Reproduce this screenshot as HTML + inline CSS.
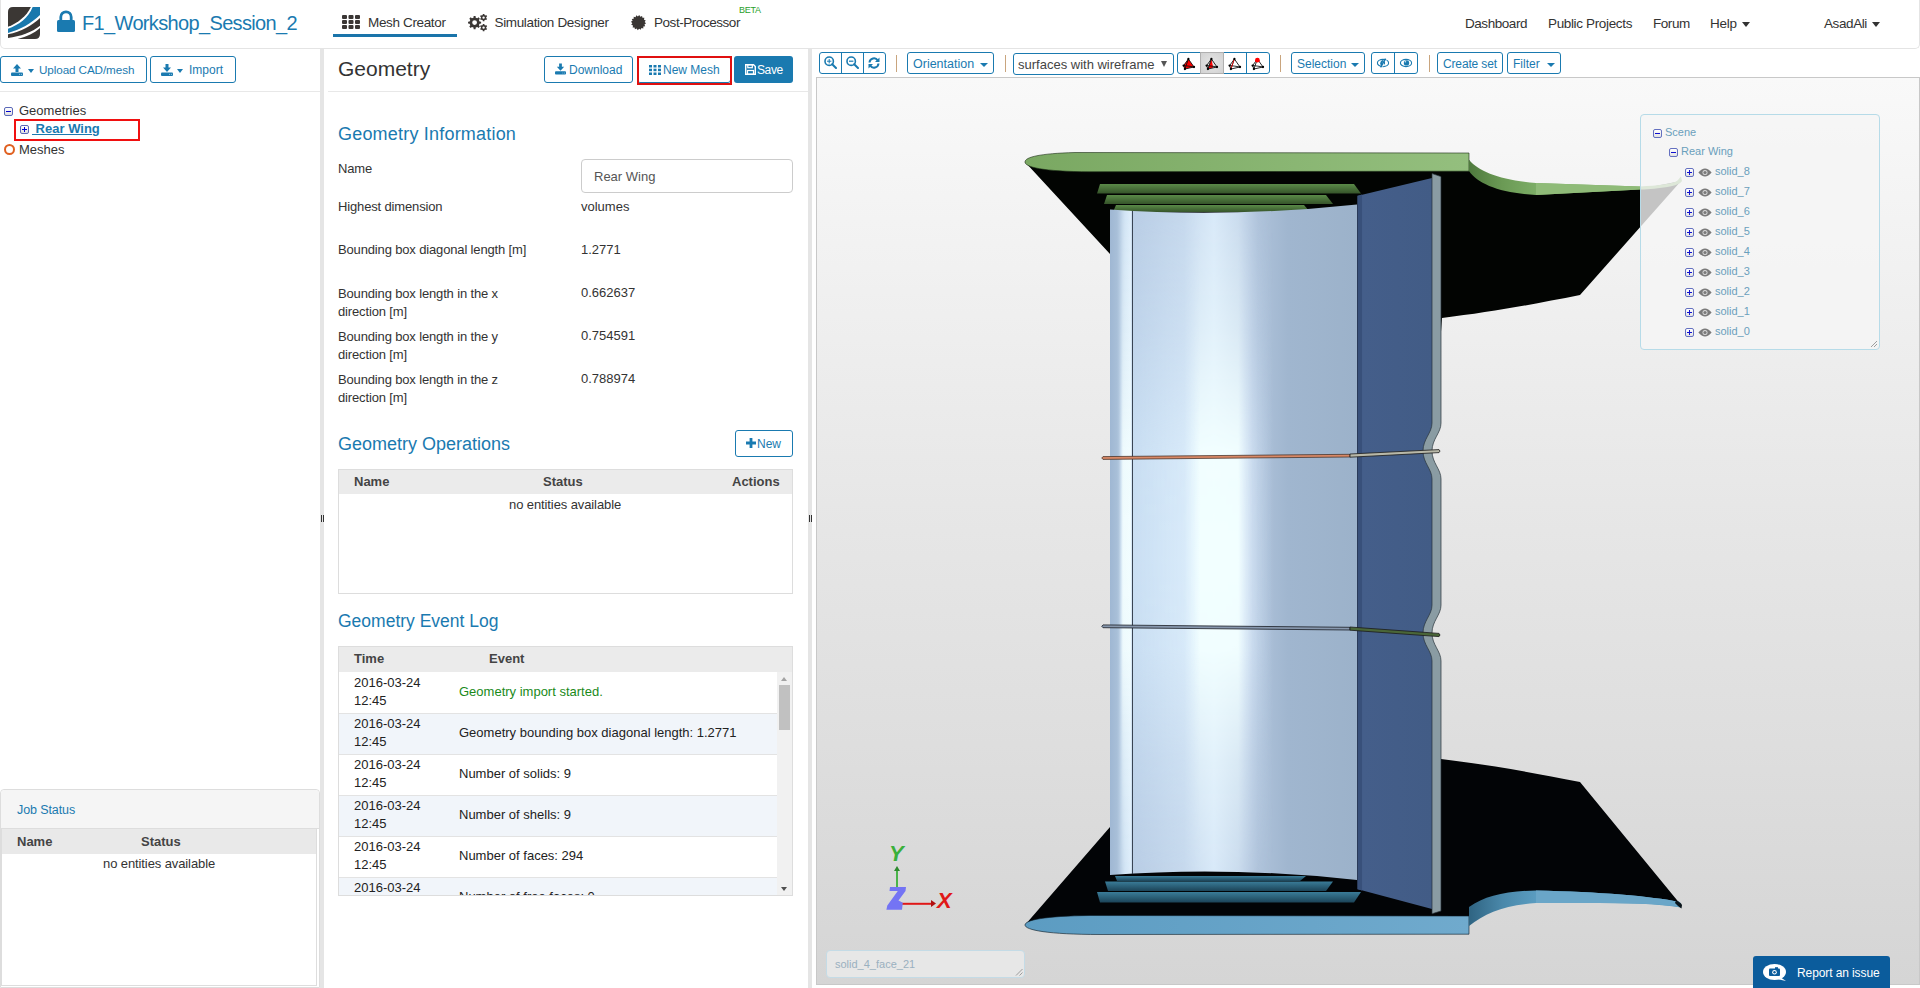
<!DOCTYPE html>
<html><head><meta charset="utf-8">
<style>
*{box-sizing:border-box;margin:0;padding:0}
html,body{width:1920px;height:988px;overflow:hidden;background:#fff;font-family:"Liberation Sans",sans-serif;color:#333}
.a{position:absolute}
.t{position:absolute;white-space:nowrap;line-height:1}
.blue{color:#1a7ab0}
.btn{position:absolute;border:1px solid #1a7ab0;border-radius:3px;background:#fff}
.vsep{position:absolute;width:1px;background:#c9a57e}
</style></head><body>

<!-- NAVBAR -->
<div class="a" style="left:0;top:0;width:1920px;height:49px;border:1px solid #e4e4e4;border-top:none;border-radius:0 0 5px 5px;background:#fff"></div>
<!-- logo -->
<svg class="a" style="left:8px;top:7px" width="32" height="32" viewBox="0 0 32 32">
  <defs><clipPath id="lc"><path d="M5,0 H32 V27 Q32,32 27,32 H0 V5 Q0,0 5,0 Z"/></clipPath></defs>
  <g clip-path="url(#lc)">
    <path d="M-1,-1 H23.3 C19,9 10,16 -1,20.2 Z" fill="#3b3734"/>
    <path d="M25,-1 H33 V7 C24,16 12,23 -1,26.2 V22 C10,18.5 21,11 25,-1 Z" fill="#1878ad"/>
    <path d="M33,10 V18 C25,25 12,30 -1,31 V27.4 C13,25 25,18 33,10 Z" fill="#3b3734"/>
    <path d="M5.5,33 C17,30.5 27,26 33,20 V33 Z" fill="#3b3734"/>
  </g>
</svg>
<!-- lock -->
<svg class="a" style="left:57px;top:10px" width="18" height="22" viewBox="0 0 18 22">
  <path d="M3.8 10 V7 A5.2 5.2 0 0 1 14.2 7 V10" stroke="#1a7ab0" stroke-width="2.8" fill="none"/>
  <rect x="0" y="10" width="18" height="12" rx="1.5" fill="#1a7ab0"/>
</svg>
<div class="t blue" style="left:82px;top:13px;font-size:20px;letter-spacing:-0.65px">F1_Workshop_Session_2</div>

<!-- tabs -->
<svg class="a" style="left:342px;top:15px" width="18" height="14" viewBox="0 0 18 14">
  <g fill="#3a3634">
  <rect x="0" y="0" width="5" height="4" rx="1"/><rect x="6.5" y="0" width="5" height="4" rx="1"/><rect x="13" y="0" width="5" height="4" rx="1"/>
  <rect x="0" y="5" width="5" height="4" rx="1"/><rect x="6.5" y="5" width="5" height="4" rx="1"/><rect x="13" y="5" width="5" height="4" rx="1"/>
  <rect x="0" y="10" width="5" height="4" rx="1"/><rect x="6.5" y="10" width="5" height="4" rx="1"/><rect x="13" y="10" width="5" height="4" rx="1"/>
  </g>
</svg>
<div class="t" style="left:368px;top:15.5px;font-size:13.5px;letter-spacing:-0.35px">Mesh Creator</div>
<div class="a" style="left:333px;top:34px;width:124px;height:3px;background:#1a74aa"></div>

<svg class="a" style="left:468px;top:14px" width="20" height="18" viewBox="0 0 20 18">
  <path fill="#3a3634" fill-rule="evenodd" d="M11.57,7.47 L13.13,7.64 L13.13,9.56 L11.57,9.73 L10.92,11.32 L11.89,12.54 L10.54,13.89 L9.32,12.92 L7.73,13.57 L7.56,15.13 L5.64,15.13 L5.47,13.57 L3.88,12.92 L2.66,13.89 L1.31,12.54 L2.28,11.32 L1.63,9.73 L0.07,9.56 L0.07,7.64 L1.63,7.47 L2.28,5.88 L1.31,4.66 L2.66,3.31 L3.88,4.28 L5.47,3.63 L5.64,2.07 L7.56,2.07 L7.73,3.63 L9.32,4.28 L10.54,3.31 L11.89,4.66 L10.92,5.88Z M9.00,8.60 A2.4,2.4 0 1 0 4.20,8.60 A2.4,2.4 0 1 0 9.00,8.60Z M18.25,4.13 L19.13,4.71 L18.32,6.10 L17.39,5.63 L16.46,6.16 L16.41,7.21 L14.79,7.21 L14.74,6.16 L13.81,5.63 L12.88,6.10 L12.07,4.71 L12.95,4.13 L12.95,3.07 L12.07,2.49 L12.88,1.10 L13.81,1.57 L14.74,1.04 L14.79,-0.01 L16.41,-0.01 L16.46,1.04 L17.39,1.57 L18.32,1.10 L19.13,2.49 L18.25,3.07Z M16.80,3.60 A1.2,1.2 0 1 0 14.40,3.60 A1.2,1.2 0 1 0 16.80,3.60Z M18.25,14.13 L19.13,14.71 L18.32,16.10 L17.39,15.63 L16.46,16.16 L16.41,17.21 L14.79,17.21 L14.74,16.16 L13.81,15.63 L12.88,16.10 L12.07,14.71 L12.95,14.13 L12.95,13.07 L12.07,12.49 L12.88,11.10 L13.81,11.57 L14.74,11.04 L14.79,9.99 L16.41,9.99 L16.46,11.04 L17.39,11.57 L18.32,11.10 L19.13,12.49 L18.25,13.07Z M16.80,13.60 A1.2,1.2 0 1 0 14.40,13.60 A1.2,1.2 0 1 0 16.80,13.60Z"/>
</svg>
<div class="t" style="left:494.5px;top:15.5px;font-size:13.5px;letter-spacing:-0.35px">Simulation Designer</div>

<svg class="a" style="left:630px;top:14px" width="17" height="17" viewBox="0 0 17 17"><path fill="#3a3634" d="M9.24,1.04 L10.30,2.67 L12.08,1.90 L12.43,3.81 L14.37,3.78 L13.97,5.68 L15.77,6.39 L14.67,7.99 L16.06,9.34 L14.43,10.40 L15.20,12.18 L13.29,12.53 L13.32,14.47 L11.42,14.07 L10.71,15.87 L9.11,14.77 L7.76,16.16 L6.70,14.53 L4.92,15.30 L4.57,13.39 L2.63,13.42 L3.03,11.52 L1.23,10.81 L2.33,9.21 L0.94,7.86 L2.57,6.80 L1.80,5.02 L3.71,4.67 L3.68,2.73 L5.58,3.13 L6.29,1.33 L7.89,2.43Z"/></svg>
<div class="t" style="left:654px;top:15.5px;font-size:13.5px;letter-spacing:-0.45px">Post-Processor</div>
<div class="t" style="left:739px;top:6px;font-size:9px;letter-spacing:-0.3px;color:#2aa02a">BETA</div>

<div class="t" style="left:1465px;top:17px;font-size:13.5px;letter-spacing:-0.45px">Dashboard</div>
<div class="t" style="left:1548px;top:17px;font-size:13.5px;letter-spacing:-0.35px">Public Projects</div>
<div class="t" style="left:1653px;top:17px;font-size:13.5px;letter-spacing:-0.45px">Forum</div>
<div class="t" style="left:1710px;top:17px;font-size:13.5px;letter-spacing:-0.25px">Help</div>
<div class="a" style="left:1742px;top:22px;width:0;height:0;border-left:4px solid transparent;border-right:4px solid transparent;border-top:5px solid #333"></div>
<div class="t" style="left:1824px;top:17px;font-size:13.5px;letter-spacing:-0.4px">AsadAli</div>
<div class="a" style="left:1872px;top:22px;width:0;height:0;border-left:4px solid transparent;border-right:4px solid transparent;border-top:5px solid #333"></div>

<!-- DIVIDERS -->
<div class="a" style="left:320px;top:49px;width:4px;height:939px;background:#e5e5e5"></div>
<div class="a" style="left:321px;top:515px;width:1px;height:7px;background:#333"></div>
<div class="a" style="left:323px;top:515px;width:1px;height:7px;background:#333"></div>
<div class="a" style="left:808px;top:49px;width:4px;height:939px;background:#e5e5e5"></div>
<div class="a" style="left:809px;top:515px;width:1px;height:7px;background:#333"></div>
<div class="a" style="left:811px;top:515px;width:1px;height:7px;background:#333"></div>

<!-- LEFT PANEL -->

<div class="btn" style="left:0;top:56px;width:147px;height:27px"></div>
<svg class="a" style="left:11px;top:64px" width="12" height="12" viewBox="0 0 12 12">
  <path d="M6 0 L10 4.5 H7.5 V8 H4.5 V4.5 H2Z" fill="#1a7ab0"/>
  <rect x="0" y="8.5" width="12" height="3.5" rx="1" fill="#1a7ab0"/><circle cx="8.6" cy="10.3" r="0.5" fill="#cfe4f0"/><circle cx="10.4" cy="10.3" r="0.5" fill="#cfe4f0"/>
</svg>
<div class="a" style="left:28px;top:69px;border-left:3.5px solid transparent;border-right:3.5px solid transparent;border-top:4px solid #1a7ab0"></div>
<div class="t blue" style="left:39px;top:64px;font-size:11.7px;letter-spacing:-0.1px">Upload CAD/mesh</div>
<div class="btn" style="left:150px;top:56px;width:86px;height:27px"></div>
<svg class="a" style="left:161px;top:64px" width="12" height="12" viewBox="0 0 12 12">
  <path d="M6 8 L10 3.5 H7.5 V0 H4.5 V3.5 H2Z" fill="#1a7ab0"/>
  <rect x="0" y="8.5" width="12" height="3.5" rx="1" fill="#1a7ab0"/><circle cx="8.6" cy="10.3" r="0.5" fill="#cfe4f0"/><circle cx="10.4" cy="10.3" r="0.5" fill="#cfe4f0"/>
</svg>
<div class="a" style="left:177px;top:69px;border-left:3.5px solid transparent;border-right:3.5px solid transparent;border-top:4px solid #1a7ab0"></div>
<div class="t blue" style="left:189px;top:64px;font-size:12px">Import</div>
<div class="a" style="left:0;top:91px;width:320px;height:1px;background:#e8e8e8"></div>

<!-- tree -->
<div class="a" style="left:4px;top:107px;width:9px;height:9px;border:1px solid #5a68b8;border-radius:2px;background:linear-gradient(#fff,#dedede)"></div>
<div class="a" style="left:6px;top:111px;width:5px;height:1.3px;background:#0000d0"></div>
<div class="t" style="left:19px;top:104px;font-size:13px;color:#333">Geometries</div>
<div class="a" style="left:14px;top:119px;width:126px;height:22px;border:2px solid #f01010"></div>
<div class="a" style="left:20px;top:125px;width:9px;height:9px;border:1px solid #5a68b8;border-radius:2px;background:linear-gradient(#fff,#dedede)"></div>
<div class="a" style="left:22px;top:129px;width:5px;height:1.3px;background:#0000d0"></div>
<div class="a" style="left:23.85px;top:127px;width:1.3px;height:5px;background:#0000d0"></div>
<div class="t" style="left:32px;top:122px;font-size:13px;font-weight:bold;color:#1a7ab0;text-decoration:underline">&nbsp;Rear Wing</div>
<div class="a" style="left:4px;top:144px;width:11px;height:11px;border:2px solid #e06020;border-radius:50%"></div>
<div class="t" style="left:19px;top:143px;font-size:13px;color:#333">Meshes</div>

<!-- job status -->
<div class="a" style="left:0;top:789px;width:320px;height:199px;border:1px solid #ddd;border-radius:4px 4px 0 0;background:#fff"></div>
<div class="a" style="left:1px;top:790px;width:318px;height:39px;background:#f5f5f5;border-bottom:1px solid #ddd;border-radius:4px 4px 0 0"></div>
<div class="t blue" style="left:17px;top:804px;font-size:12.5px;letter-spacing:-0.1px">Job Status</div>
<div class="a" style="left:1px;top:829px;width:316px;height:157px;border:1px solid #ddd;border-top:none;background:#fff"></div>
<div class="a" style="left:2px;top:829px;width:314px;height:25px;background:#e9e9e9"></div>
<div class="t" style="left:17px;top:835px;font-size:13px;font-weight:bold;color:#444">Name</div>
<div class="t" style="left:141px;top:835px;font-size:13px;font-weight:bold;color:#444">Status</div>
<div class="t" style="left:103px;top:857px;font-size:13px;color:#333;letter-spacing:-0.1px">no entities available</div>


<!-- MIDDLE PANEL -->

<div class="t" style="left:338px;top:58px;font-size:21px;color:#333">Geometry</div>
<div class="btn" style="left:544px;top:56px;width:89px;height:27px"></div>
<svg class="a" style="left:555px;top:63px" width="11" height="12" viewBox="0 0 12 12">
  <path d="M6 8 L10 3.5 H7.5 V0 H4.5 V3.5 H2Z" fill="#1a7ab0"/>
  <rect x="0" y="8.5" width="12" height="3.5" rx="1" fill="#1a7ab0"/><circle cx="8.6" cy="10.3" r="0.5" fill="#cfe4f0"/><circle cx="10.4" cy="10.3" r="0.5" fill="#cfe4f0"/>
</svg>
<div class="t blue" style="left:569px;top:64px;font-size:12px">Download</div>
<div class="btn" style="left:637px;top:56px;width:94px;height:27px"></div>
<div class="a" style="left:637px;top:56px;width:95px;height:29px;border:2px solid #e01010"></div>
<svg class="a" style="left:649px;top:65px" width="12" height="10" viewBox="0 0 12 10">
  <g fill="#1a7ab0"><rect x="0" y="0" width="3" height="2.5"/><rect x="4.5" y="0" width="3" height="2.5"/><rect x="9" y="0" width="3" height="2.5"/>
  <rect x="0" y="3.7" width="3" height="2.5"/><rect x="4.5" y="3.7" width="3" height="2.5"/><rect x="9" y="3.7" width="3" height="2.5"/>
  <rect x="0" y="7.5" width="3" height="2.5"/><rect x="4.5" y="7.5" width="3" height="2.5"/><rect x="9" y="7.5" width="3" height="2.5"/></g>
</svg>
<div class="t blue" style="left:663px;top:64px;font-size:12px">New Mesh</div>
<div class="a" style="left:734px;top:56px;width:59px;height:27px;background:#1a7ab0;border-radius:3px"></div>
<svg class="a" style="left:745px;top:64px" width="11" height="11" viewBox="0 0 11 11">
  <path d="M0.7 0.7 H8.5 L10.3 2.5 V10.3 H0.7Z" fill="none" stroke="#fff" stroke-width="1.4"/>
  <rect x="2.8" y="0.7" width="4.5" height="3" fill="none" stroke="#fff" stroke-width="1.2"/>
  <rect x="2.5" y="6.5" width="6" height="3.8" fill="none" stroke="#fff" stroke-width="1.2"/>
</svg>
<div class="t" style="left:757px;top:64px;font-size:12px;color:#fff;letter-spacing:-0.4px">Save</div>
<div class="a" style="left:328px;top:91px;width:480px;height:1px;background:#e8e8e8"></div>

<div class="t blue" style="left:338px;top:125px;font-size:18px;letter-spacing:0.2px">Geometry Information</div>
<div class="t" style="left:338px;top:162px;font-size:13px;letter-spacing:-0.15px">Name</div>
<div class="a" style="left:581px;top:159px;width:212px;height:34px;border:1px solid #ccc;border-radius:4px;background:#fff"></div>
<div class="t" style="left:594px;top:170px;font-size:13px;color:#555">Rear Wing</div>
<div class="t" style="left:338px;top:200px;font-size:13px;letter-spacing:-0.15px">Highest dimension</div>
<div class="t" style="left:581px;top:200px;font-size:13px">volumes</div>
<div class="t" style="left:338px;top:243px;font-size:13px;letter-spacing:-0.15px">Bounding box diagonal length [m]</div>
<div class="t" style="left:581px;top:243px;font-size:13px">1.2771</div>
<div class="t" style="left:338px;top:285px;font-size:13px;letter-spacing:-0.15px;line-height:18px">Bounding box length in the x<br>direction [m]</div>
<div class="t" style="left:581px;top:286px;font-size:13px">0.662637</div>
<div class="t" style="left:338px;top:328px;font-size:13px;letter-spacing:-0.15px;line-height:18px">Bounding box length in the y<br>direction [m]</div>
<div class="t" style="left:581px;top:329px;font-size:13px">0.754591</div>
<div class="t" style="left:338px;top:371px;font-size:13px;letter-spacing:-0.15px;line-height:18px">Bounding box length in the z<br>direction [m]</div>
<div class="t" style="left:581px;top:372px;font-size:13px">0.788974</div>

<div class="t blue" style="left:338px;top:435px;font-size:18px">Geometry Operations</div>
<div class="btn" style="left:735px;top:430px;width:58px;height:27px"></div>
<svg class="a" style="left:746px;top:438px" width="10" height="10" viewBox="0 0 10 10"><path d="M3.6 0H6.4V3.6H10V6.4H6.4V10H3.6V6.4H0V3.6H3.6Z" fill="#1a7ab0"/></svg>
<div class="t blue" style="left:757px;top:438px;font-size:12px">New</div>
<div class="a" style="left:338px;top:469px;width:455px;height:125px;border:1px solid #ddd;background:#fff"></div>
<div class="a" style="left:339px;top:470px;width:453px;height:24px;background:#ebebeb"></div>
<div class="t" style="left:354px;top:475px;font-size:13px;font-weight:bold;color:#444">Name</div>
<div class="t" style="left:543px;top:475px;font-size:13px;font-weight:bold;color:#444">Status</div>
<div class="t" style="left:732px;top:475px;font-size:13px;font-weight:bold;color:#444">Actions</div>
<div class="t" style="left:509px;top:498px;font-size:13px;letter-spacing:-0.1px">no entities available</div>

<div class="t blue" style="left:338px;top:613px;font-size:17.5px;">Geometry Event Log</div>
<div class="a" style="left:338px;top:646px;width:455px;height:250px;border:1px solid #ddd;background:#fff;overflow:hidden">
  <div class="a" style="left:0;top:0;width:453px;height:25px;background:#ebebeb"></div>
  <div class="t" style="left:15px;top:5px;font-size:13px;font-weight:bold;color:#444">Time</div>
  <div class="t" style="left:150px;top:5px;font-size:13px;font-weight:bold;color:#444">Event</div>
  <div class="a" style="left:0;top:25px;width:438px;height:41px;background:#fff;border-top:none"></div><div class="t" style="left:15px;top:27px;font-size:13px;line-height:18px;color:#222">2016-03-24<br>12:45</div><div class="t" style="left:120px;top:38px;font-size:13px;color:#1a8a1a">Geometry import started.</div><div class="a" style="left:0;top:66px;width:438px;height:41px;background:#f1f5fa;border-top:1px solid #e3e3e3"></div><div class="t" style="left:15px;top:68px;font-size:13px;line-height:18px;color:#222">2016-03-24<br>12:45</div><div class="t" style="left:120px;top:79px;font-size:13px;color:#222">Geometry bounding box diagonal length: 1.2771</div><div class="a" style="left:0;top:107px;width:438px;height:41px;background:#fff;border-top:1px solid #e3e3e3"></div><div class="t" style="left:15px;top:109px;font-size:13px;line-height:18px;color:#222">2016-03-24<br>12:45</div><div class="t" style="left:120px;top:120px;font-size:13px;color:#222">Number of solids: 9</div><div class="a" style="left:0;top:148px;width:438px;height:41px;background:#f1f5fa;border-top:1px solid #e3e3e3"></div><div class="t" style="left:15px;top:150px;font-size:13px;line-height:18px;color:#222">2016-03-24<br>12:45</div><div class="t" style="left:120px;top:161px;font-size:13px;color:#222">Number of shells: 9</div><div class="a" style="left:0;top:189px;width:438px;height:41px;background:#fff;border-top:1px solid #e3e3e3"></div><div class="t" style="left:15px;top:191px;font-size:13px;line-height:18px;color:#222">2016-03-24<br>12:45</div><div class="t" style="left:120px;top:202px;font-size:13px;color:#222">Number of faces: 294</div><div class="a" style="left:0;top:230px;width:438px;height:41px;background:#f1f5fa;border-top:1px solid #e3e3e3"></div><div class="t" style="left:15px;top:232px;font-size:13px;line-height:18px;color:#222">2016-03-24<br>12:45</div><div class="t" style="left:120px;top:243px;font-size:13px;color:#222">Number of free faces: 0</div>
  <div class="a" style="left:438px;top:25px;width:15px;height:224px;background:#f1f1f1"></div>
  <div class="a" style="left:440px;top:38px;width:11px;height:45px;background:#c1c1c1"></div>
  <div class="a" style="left:442px;top:30px;border-left:3.5px solid transparent;border-right:3.5px solid transparent;border-bottom:4px solid #a3a3a3"></div>
  <div class="a" style="left:442px;top:240px;border-left:3.5px solid transparent;border-right:3.5px solid transparent;border-top:4px solid #505050"></div>
</div>


<!-- VIEWER -->

<!-- toolbar -->
<div class="a" style="left:812px;top:49px;width:1108px;height:28px;background:#fff"></div>
<div class="btn" style="left:819px;top:52px;width:67px;height:22px"></div>
<div class="a" style="left:841px;top:52px;width:1px;height:22px;background:#1a7ab0"></div>
<div class="a" style="left:863px;top:52px;width:1px;height:22px;background:#1a7ab0"></div>
<svg class="a" style="left:824px;top:56px" width="13" height="13" viewBox="0 0 13 13">
  <circle cx="5.2" cy="5.2" r="4.2" fill="none" stroke="#1a7ab0" stroke-width="1.6"/>
  <line x1="8.2" y1="8.2" x2="12" y2="12" stroke="#1a7ab0" stroke-width="2" stroke-linecap="round"/>
  <line x1="3" y1="5.2" x2="7.4" y2="5.2" stroke="#1a7ab0" stroke-width="1"/>
  <line x1="5.2" y1="3" x2="5.2" y2="7.4" stroke="#1a7ab0" stroke-width="1"/>
</svg>
<svg class="a" style="left:846px;top:56px" width="13" height="13" viewBox="0 0 13 13">
  <circle cx="5.2" cy="5.2" r="4.2" fill="none" stroke="#1a7ab0" stroke-width="1.6"/>
  <line x1="8.2" y1="8.2" x2="12" y2="12" stroke="#1a7ab0" stroke-width="2" stroke-linecap="round"/>
  <line x1="3" y1="5.2" x2="7.4" y2="5.2" stroke="#1a7ab0" stroke-width="1.2"/>
</svg>
<svg class="a" style="left:868px;top:57px" width="12" height="12" viewBox="0 0 12 12">
  <path d="M1.5 5.5 A4.5 4.5 0 0 1 9.8 3.5" fill="none" stroke="#1a7ab0" stroke-width="2"/>
  <path d="M11.5 0.5 V5 H7Z" fill="#1a7ab0"/>
  <path d="M10.5 6.5 A4.5 4.5 0 0 1 2.2 8.5" fill="none" stroke="#1a7ab0" stroke-width="2"/>
  <path d="M0.5 11.5 V7 H5Z" fill="#1a7ab0"/>
</svg>
<div class="vsep" style="left:896px;top:55px;height:17px"></div>
<div class="btn" style="left:907px;top:52px;width:87px;height:22px"></div>
<div class="t blue" style="left:913px;top:58px;font-size:12.5px">Orientation</div>
<div class="a" style="left:980px;top:63px;border-left:4px solid transparent;border-right:4px solid transparent;border-top:4px solid #1a7ab0"></div>
<div class="vsep" style="left:1005px;top:55px;height:17px"></div>
<div class="btn" style="left:1013px;top:53px;width:161px;height:22px"></div>
<div class="t" style="left:1018px;top:58px;font-size:13px;color:#444">surfaces with wireframe</div>
<div class="a" style="left:1161px;top:61px;border-left:3px solid transparent;border-right:3px solid transparent;border-top:6px solid #555"></div>
<div class="btn" style="left:1177px;top:52px;width:93px;height:22px"></div>
<div class="a" style="left:1200px;top:52px;width:24px;height:22px;background:radial-gradient(ellipse at center,#e6e6e6 0%,#d2d2d2 100%);border:1px solid #b0b0b0"></div>
<div class="a" style="left:1246px;top:52px;width:1px;height:22px;background:#1a7ab0"></div>
<svg class="a" style="left:1182px;top:56px" width="14" height="16" viewBox="0 0 14 16"><path d="M6.4,3.0 L1.6,9.6 L2.9,13.0 L12.0,11.0Z" fill="#f00"/><path d="M6.4,3.0 L1.6,9.6 M6.4,3.0 L2.9,13.0 M6.4,3.0 L12.0,11.0 M1.6,9.6 L2.9,13.0 M2.9,13.0 L12.0,11.0 M1.6,9.6 Q7,10 12.0,11.0" fill="none" stroke="#111" stroke-width="0.9"/><circle cx="6.4" cy="3" r="1.15" fill="#000"/><circle cx="1.6" cy="9.6" r="1.15" fill="#000"/><circle cx="2.9" cy="13" r="1.15" fill="#000"/><circle cx="12" cy="11" r="1.15" fill="#000"/></svg><svg class="a" style="left:1205px;top:56px" width="14" height="16" viewBox="0 0 14 16"><path d="M6.4,3.0 L2.9,13.0 L8.2,11.5Z" fill="#f00"/><path d="M6.4,3.0 L1.6,9.6 M6.4,3.0 L2.9,13.0 M6.4,3.0 L12.0,11.0 M1.6,9.6 L2.9,13.0 M2.9,13.0 L12.0,11.0 M1.6,9.6 Q7,10 12.0,11.0" fill="none" stroke="#111" stroke-width="0.9"/><circle cx="6.4" cy="3" r="1.15" fill="#000"/><circle cx="1.6" cy="9.6" r="1.15" fill="#000"/><circle cx="2.9" cy="13" r="1.15" fill="#000"/><circle cx="12" cy="11" r="1.15" fill="#000"/></svg><svg class="a" style="left:1228px;top:56px" width="14" height="16" viewBox="0 0 14 16"><path d="M6.4,3.0 L1.6,9.6 M6.4,3.0 L2.9,13.0 M6.4,3.0 L12.0,11.0 M1.6,9.6 L2.9,13.0 M2.9,13.0 L12.0,11.0 M1.6,9.6 Q7,10 12.0,11.0" fill="none" stroke="#111" stroke-width="0.9"/><line x1="6.2" y1="3.5" x2="3" y2="12.5" stroke="#f00" stroke-width="0.8"/><circle cx="6.4" cy="3" r="1.15" fill="#000"/><circle cx="1.6" cy="9.6" r="1.15" fill="#000"/><circle cx="2.9" cy="13" r="1.15" fill="#000"/><circle cx="12" cy="11" r="1.15" fill="#000"/></svg><svg class="a" style="left:1251px;top:56px" width="14" height="16" viewBox="0 0 14 16"><path d="M6.4,3.0 L1.6,9.6 M6.4,3.0 L2.9,13.0 M6.4,3.0 L12.0,11.0 M1.6,9.6 L2.9,13.0 M2.9,13.0 L12.0,11.0 M1.6,9.6 Q7,10 12.0,11.0" fill="none" stroke="#111" stroke-width="0.9"/><circle cx="1.6" cy="9.6" r="1.15" fill="#000"/><circle cx="2.9" cy="13" r="1.15" fill="#000"/><circle cx="12" cy="11" r="1.15" fill="#000"/><circle cx="6.4" cy="4.2" r="2.4" fill="#f00"/></svg>
<div class="vsep" style="left:1280px;top:55px;height:17px"></div>
<div class="btn" style="left:1291px;top:52px;width:74px;height:22px"></div>
<div class="t blue" style="left:1297px;top:58px;font-size:12px">Selection</div>
<div class="a" style="left:1351px;top:63px;border-left:4px solid transparent;border-right:4px solid transparent;border-top:4px solid #1a7ab0"></div>
<div class="btn" style="left:1371px;top:52px;width:47px;height:22px"></div>
<div class="a" style="left:1394px;top:52px;width:1px;height:22px;background:#1a7ab0"></div>
<svg class="a" style="left:1376px;top:58px" width="14" height="10" viewBox="0 0 14 10">
  <ellipse cx="7" cy="5" rx="5.6" ry="3.6" fill="none" stroke="#1a7ab0" stroke-width="1.1"/>
  <path d="M4.2 5.5 Q4.5 2.5 7.5 1.8 L5.6 8.2 Q4.3 7.2 4.2 5.5Z" fill="#1a7ab0"/>
  <line x1="9.6" y1="0.6" x2="4.6" y2="9.4" stroke="#1a7ab0" stroke-width="1.5"/>
  <line x1="10.8" y1="1.2" x2="6" y2="9.8" stroke="#fff" stroke-width="0.7"/>
  <path d="M8.3 3.5 Q9 5 8.2 6.5" fill="none" stroke="#1a7ab0" stroke-width="1"/>
</svg>
<svg class="a" style="left:1399px;top:58px" width="14" height="10" viewBox="0 0 14 10">
  <ellipse cx="7" cy="5" rx="5.6" ry="3.6" fill="none" stroke="#1a7ab0" stroke-width="1.1"/>
  <circle cx="7.5" cy="4.9" r="2.7" fill="#1a7ab0"/>
  <circle cx="6.4" cy="3.8" r="0.8" fill="#cfe6f2"/>
</svg>
<div class="vsep" style="left:1429px;top:55px;height:17px"></div>
<div class="btn" style="left:1437px;top:52px;width:66px;height:22px"></div>
<div class="t blue" style="left:1443px;top:58px;font-size:12px;letter-spacing:-0.15px">Create set</div>
<div class="btn" style="left:1507px;top:52px;width:54px;height:22px"></div>
<div class="t blue" style="left:1513px;top:58px;font-size:12px">Filter</div>
<div class="a" style="left:1547px;top:63px;border-left:4px solid transparent;border-right:4px solid transparent;border-top:4px solid #1a7ab0"></div>

<!-- canvas -->
<div class="a" style="left:816px;top:77px;width:1104px;height:908px;border:1px solid #c8c8c8;background:linear-gradient(to bottom,#f9f9f9 0%,#e7e7e7 47%,#d5d5d5 100%)"></div>

<svg class="a" style="left:0;top:0" width="1920" height="988" viewBox="0 0 1920 988">
<defs>
  <linearGradient id="gTop" x1="0" x2="1" y1="0" y2="0">
    <stop offset="0" stop-color="#7aa862"/><stop offset="1" stop-color="#94bf7e"/>
  </linearGradient>
  <linearGradient id="gCurveTop" x1="1469" x2="1536" y1="0" y2="0" gradientUnits="userSpaceOnUse">
    <stop offset="0" stop-color="#4f7a3e"/><stop offset="0.5" stop-color="#6b9a55"/><stop offset="1" stop-color="#7cad66"/>
  </linearGradient>
  <linearGradient id="gSlat" x1="0" x2="0" y1="0" y2="1">
    <stop offset="0" stop-color="#5a8a48"/><stop offset="1" stop-color="#36542a"/>
  </linearGradient>
  <linearGradient id="gMain" x1="1110" x2="1357" y1="0" y2="0" gradientUnits="userSpaceOnUse"><stop offset="0.0000" stop-color="#9fb7d3"/><stop offset="0.0283" stop-color="#a8bfd8"/><stop offset="0.0607" stop-color="#cfe2f4"/><stop offset="0.0850" stop-color="#dcecfa"/><stop offset="0.0891" stop-color="#b8cce4"/><stop offset="0.1215" stop-color="#b9cde5"/><stop offset="0.2996" stop-color="#c4d7ec"/><stop offset="0.4211" stop-color="#d6e7f8"/><stop offset="0.5182" stop-color="#c6d8ec"/><stop offset="0.5992" stop-color="#aec2da"/><stop offset="0.7206" stop-color="#a0b6cf"/><stop offset="1.0000" stop-color="#9cb2ca"/></linearGradient>
  <linearGradient id="gHi" x1="1110" x2="1357" y1="0" y2="0" gradientUnits="userSpaceOnUse"><stop offset="0.0000" stop-color="#e8f6ff" stop-opacity="0"/><stop offset="0.0364" stop-color="#e8f6ff" stop-opacity="0"/><stop offset="0.0526" stop-color="#f4ffff" stop-opacity="0.9"/><stop offset="0.0850" stop-color="#f4ffff" stop-opacity="0.9"/><stop offset="0.0891" stop-color="#e0f0ff" stop-opacity="0"/><stop offset="0.0931" stop-color="#d8eeff" stop-opacity="0.55"/><stop offset="0.2996" stop-color="#e0f2ff" stop-opacity="0.7"/><stop offset="0.3644" stop-color="#f2ffff" stop-opacity="1"/><stop offset="0.5182" stop-color="#f2ffff" stop-opacity="1"/><stop offset="0.5749" stop-color="#e2f0ff" stop-opacity="0.5"/><stop offset="0.6640" stop-color="#d8ebff" stop-opacity="0"/><stop offset="1.0000" stop-color="#d8ebff" stop-opacity="0"/></linearGradient>
  <linearGradient id="gHiV" x1="0" x2="0" y1="210" y2="875" gradientUnits="userSpaceOnUse"><stop offset="0.0000" stop-color="#fff" stop-opacity="0.1"/><stop offset="0.1805" stop-color="#fff" stop-opacity="0.45"/><stop offset="0.3609" stop-color="#fff" stop-opacity="0.95"/><stop offset="0.5263" stop-color="#fff" stop-opacity="1"/><stop offset="0.6617" stop-color="#fff" stop-opacity="0.95"/><stop offset="0.8271" stop-color="#fff" stop-opacity="0.45"/><stop offset="1.0000" stop-color="#fff" stop-opacity="0.1"/></linearGradient>
  <mask id="mHi" maskUnits="userSpaceOnUse" x="1100" y="200" width="270" height="690"><rect x="1100" y="200" width="270" height="690" fill="url(#gHiV)"/></mask>
  </linearGradient>
  <linearGradient id="gDark" x1="0" x2="1" y1="0" y2="0">
    <stop offset="0" stop-color="#3c5580"/><stop offset="0.08" stop-color="#445e8a"/><stop offset="1" stop-color="#425c86"/>
  </linearGradient>
  <linearGradient id="gBot" x1="0" x2="1" y1="0" y2="0">
    <stop offset="0" stop-color="#5c9cc2"/><stop offset="1" stop-color="#70aacd"/>
  </linearGradient>
  <linearGradient id="gCurveBot" x1="1469" x2="1536" y1="0" y2="0" gradientUnits="userSpaceOnUse">
    <stop offset="0" stop-color="#2f6482"/><stop offset="0.5" stop-color="#4a88aa"/><stop offset="1" stop-color="#5a9cc0"/>
  </linearGradient>
  <linearGradient id="gSlatB" x1="0" x2="0" y1="0" y2="1">
    <stop offset="0" stop-color="#3a7c98"/><stop offset="1" stop-color="#1c4458"/>
  </linearGradient>
</defs>

<!-- upper black underside -->
<path d="M1025,162 L1469,160 C1480,178 1505,186 1536,190 L1640,189 L1681,181 L1580,295 C1530,305 1490,312 1442,318 L1436,400 L1200,400 L1200,260 L1110,260 L1110,254 Z" fill="#020402"/>
<!-- lower black underside -->
<path d="M1110,827 L1025,925 L1469,918 C1480,905 1505,894 1536,891 L1681,905 L1580,782 C1530,772 1490,765 1441,759 L1436,700 L1200,700 L1200,850 L1110,850 Z" fill="#020406"/>

<!-- upper slats -->
<path d="M1100,184 L1354,184 L1361,193.5 L1097,193.5Z" fill="url(#gSlat)"/>
<path d="M1107,195 L1326,195 L1333,204 L1104,204Z" fill="url(#gSlat)"/>
<path d="M1116,205 L1304,205 L1310,212 L1113,212Z" fill="url(#gSlat)"/>
<!-- lower slats -->
<path d="M1115,876 L1306,876 L1300,881 L1117,881Z" fill="url(#gSlatB)"/>
<path d="M1105,881.5 L1333,881.5 L1326,891 L1108,891Z" fill="url(#gSlatB)"/>
<path d="M1097,892 L1361,892 L1354,902.5 L1100,902.5Z" fill="url(#gSlatB)"/>

<!-- top green plate -->
<path d="M1469,153 L1075,152.5 C1040,153.5 1025,157 1025,162 C1025,167 1042,171.5 1090,171.8 L1469,171.2 Z" fill="url(#gTop)" stroke="#1a2a14" stroke-width="0.6"/>
<!-- top curve band -->
<path d="M1469,160 C1480,172 1500,180 1536,183 L1640,186.5 C1658,185.5 1670,184 1676,181.5 C1679,180 1679,178 1681,176.5 L1682,181 C1680,184 1676,185 1670,186.5 C1658,188.5 1650,189.3 1640,189.6 L1536,195 C1500,193 1478,184 1469,171 Z" fill="url(#gCurveTop)"/>
<path d="M1536,183 L1640,186.5 L1640,189.6 L1536,195Z" fill="#8fbb78"/>

<!-- bottom blue plate -->
<path d="M1469,916 L1090,915.5 C1045,916 1025,920 1025,925 C1025,930 1048,934.5 1100,934.5 L1469,934.2 Z" fill="url(#gBot)" stroke="#0a1a24" stroke-width="0.6"/>
<!-- bottom curve band -->
<path d="M1469,907 C1485,896 1505,891 1536,890.5 C1600,892 1650,896 1680,902 L1681,907.5 C1650,902 1600,903 1536,903 C1505,905 1485,913 1469,926 Z" fill="url(#gCurveBot)"/>
<path d="M1536,890.5 C1600,892 1650,896 1680,902 L1681,907 C1650,902 1600,903 1536,903Z" fill="#6aa6c8"/>
<path d="M1676,900.5 C1679,901.5 1681,903 1682,905 L1681.5,908.5 C1679,907 1677,905 1675,903Z" fill="#0a141a"/>

<!-- main light plate -->
<path d="M1110,209.5 Q1230,218 1357,204.5 L1357,880 Q1230,866 1110,875 Z" fill="url(#gMain)"/>
<path d="M1110,209.5 Q1230,218 1357,204.5 L1357,880 Q1230,866 1110,875 Z" fill="url(#gHi)" mask="url(#mHi)"/>
<line x1="1132.5" y1="211" x2="1132.5" y2="874" stroke="#2a3442" stroke-width="0.9"/>

<!-- dark blue plate -->
<path d="M1357,196 L1432,178 L1432,909 L1357,889 Z" fill="url(#gDark)"/>
<path d="M1357,196 L1362,194.5 L1362,890.5 L1357,889Z" fill="#38507a"/><line x1="1357.5" y1="196" x2="1357.5" y2="889" stroke="#2a3a58" stroke-width="1"/>
<!-- grey strip with notches -->
<path d="M1432,173.5 L1441,176.6 L1441,423 C1441,433 1432,439 1432,451 C1432,463 1441,469 1441,479 L1441,605 C1441,615 1432,621 1432,633 C1432,645 1441,651 1441,661 L1441,911 L1432,913.8 L1432,661 C1432,651 1423,645 1423,633 C1423,621 1432,615 1432,605 L1432,479 C1432,469 1423,463 1423,451 C1423,439 1432,433 1432,423 Z" fill="#8a9ca3" stroke="#26323a" stroke-width="0.7"/>

<!-- rings -->
<path d="M1103,456.6 L1350,454.3 L1350,457 L1103,459.4 Q1100.5,458 1103,456.6Z" fill="#d88866" stroke="#3a2a22" stroke-width="0.7"/>
<path d="M1350,454 L1439,449.6 Q1441,451 1439,452.6 L1350,457.2Z" fill="#b8b8a8" stroke="#1a1a1a" stroke-width="0.8"/>
<path d="M1103,624.9 L1350,627.3 L1350,630 L1103,627.7 Q1100.5,626.3 1103,624.9Z" fill="#8797ad" stroke="#1a1e26" stroke-width="0.8"/>
<path d="M1350,627 L1439,633.4 Q1441,635 1439,636.6 L1350,630.2Z" fill="#4a6638" stroke="#1a1a1a" stroke-width="0.8"/>
</svg>


<div class="a" style="left:1640px;top:114px;width:240px;height:236px;border:1px solid #b6dbe8;border-radius:4px;background:rgba(245,245,245,0.8)"></div>
<div class="a" style="left:1653px;top:129px;width:9px;height:9px;border:1px solid #6470c0;border-radius:2px;background:linear-gradient(#fff,#e2e2e2)"></div><div class="a" style="left:1655px;top:133px;width:5px;height:1px;background:#1010d0"></div><div class="t" style="left:1665px;top:127px;font-size:11px;color:#6a9fbc">Scene</div><div class="a" style="left:1669px;top:148px;width:9px;height:9px;border:1px solid #6470c0;border-radius:2px;background:linear-gradient(#fff,#e2e2e2)"></div><div class="a" style="left:1671px;top:152px;width:5px;height:1px;background:#1010d0"></div><div class="t" style="left:1681px;top:146px;font-size:11px;color:#6a9fbc">Rear Wing</div><div class="a" style="left:1685px;top:168px;width:9px;height:9px;border:1px solid #6470c0;border-radius:2px;background:linear-gradient(#fff,#e2e2e2)"></div><div class="a" style="left:1687px;top:172px;width:5px;height:1px;background:#1010d0"></div><div class="a" style="left:1689px;top:170px;width:1px;height:5px;background:#1010d0"></div><svg class="a" style="left:1698px;top:168px" width="14" height="9" viewBox="0 0 14 9"><path d="M0.4,4.5 Q7,-3.4 13.6,4.5 Q7,12.4 0.4,4.5Z" fill="#7a7a7a"/><circle cx="7" cy="4.5" r="2.5" fill="#d8d8d8"/><circle cx="7" cy="4.5" r="1.6" fill="#7a7a7a"/></svg><div class="t" style="left:1715px;top:166px;font-size:11px;color:#6a9fbc">solid_8</div><div class="a" style="left:1685px;top:188px;width:9px;height:9px;border:1px solid #6470c0;border-radius:2px;background:linear-gradient(#fff,#e2e2e2)"></div><div class="a" style="left:1687px;top:192px;width:5px;height:1px;background:#1010d0"></div><div class="a" style="left:1689px;top:190px;width:1px;height:5px;background:#1010d0"></div><svg class="a" style="left:1698px;top:188px" width="14" height="9" viewBox="0 0 14 9"><path d="M0.4,4.5 Q7,-3.4 13.6,4.5 Q7,12.4 0.4,4.5Z" fill="#7a7a7a"/><circle cx="7" cy="4.5" r="2.5" fill="#d8d8d8"/><circle cx="7" cy="4.5" r="1.6" fill="#7a7a7a"/></svg><div class="t" style="left:1715px;top:186px;font-size:11px;color:#6a9fbc">solid_7</div><div class="a" style="left:1685px;top:208px;width:9px;height:9px;border:1px solid #6470c0;border-radius:2px;background:linear-gradient(#fff,#e2e2e2)"></div><div class="a" style="left:1687px;top:212px;width:5px;height:1px;background:#1010d0"></div><div class="a" style="left:1689px;top:210px;width:1px;height:5px;background:#1010d0"></div><svg class="a" style="left:1698px;top:208px" width="14" height="9" viewBox="0 0 14 9"><path d="M0.4,4.5 Q7,-3.4 13.6,4.5 Q7,12.4 0.4,4.5Z" fill="#7a7a7a"/><circle cx="7" cy="4.5" r="2.5" fill="#d8d8d8"/><circle cx="7" cy="4.5" r="1.6" fill="#7a7a7a"/></svg><div class="t" style="left:1715px;top:206px;font-size:11px;color:#6a9fbc">solid_6</div><div class="a" style="left:1685px;top:228px;width:9px;height:9px;border:1px solid #6470c0;border-radius:2px;background:linear-gradient(#fff,#e2e2e2)"></div><div class="a" style="left:1687px;top:232px;width:5px;height:1px;background:#1010d0"></div><div class="a" style="left:1689px;top:230px;width:1px;height:5px;background:#1010d0"></div><svg class="a" style="left:1698px;top:228px" width="14" height="9" viewBox="0 0 14 9"><path d="M0.4,4.5 Q7,-3.4 13.6,4.5 Q7,12.4 0.4,4.5Z" fill="#7a7a7a"/><circle cx="7" cy="4.5" r="2.5" fill="#d8d8d8"/><circle cx="7" cy="4.5" r="1.6" fill="#7a7a7a"/></svg><div class="t" style="left:1715px;top:226px;font-size:11px;color:#6a9fbc">solid_5</div><div class="a" style="left:1685px;top:248px;width:9px;height:9px;border:1px solid #6470c0;border-radius:2px;background:linear-gradient(#fff,#e2e2e2)"></div><div class="a" style="left:1687px;top:252px;width:5px;height:1px;background:#1010d0"></div><div class="a" style="left:1689px;top:250px;width:1px;height:5px;background:#1010d0"></div><svg class="a" style="left:1698px;top:248px" width="14" height="9" viewBox="0 0 14 9"><path d="M0.4,4.5 Q7,-3.4 13.6,4.5 Q7,12.4 0.4,4.5Z" fill="#7a7a7a"/><circle cx="7" cy="4.5" r="2.5" fill="#d8d8d8"/><circle cx="7" cy="4.5" r="1.6" fill="#7a7a7a"/></svg><div class="t" style="left:1715px;top:246px;font-size:11px;color:#6a9fbc">solid_4</div><div class="a" style="left:1685px;top:268px;width:9px;height:9px;border:1px solid #6470c0;border-radius:2px;background:linear-gradient(#fff,#e2e2e2)"></div><div class="a" style="left:1687px;top:272px;width:5px;height:1px;background:#1010d0"></div><div class="a" style="left:1689px;top:270px;width:1px;height:5px;background:#1010d0"></div><svg class="a" style="left:1698px;top:268px" width="14" height="9" viewBox="0 0 14 9"><path d="M0.4,4.5 Q7,-3.4 13.6,4.5 Q7,12.4 0.4,4.5Z" fill="#7a7a7a"/><circle cx="7" cy="4.5" r="2.5" fill="#d8d8d8"/><circle cx="7" cy="4.5" r="1.6" fill="#7a7a7a"/></svg><div class="t" style="left:1715px;top:266px;font-size:11px;color:#6a9fbc">solid_3</div><div class="a" style="left:1685px;top:288px;width:9px;height:9px;border:1px solid #6470c0;border-radius:2px;background:linear-gradient(#fff,#e2e2e2)"></div><div class="a" style="left:1687px;top:292px;width:5px;height:1px;background:#1010d0"></div><div class="a" style="left:1689px;top:290px;width:1px;height:5px;background:#1010d0"></div><svg class="a" style="left:1698px;top:288px" width="14" height="9" viewBox="0 0 14 9"><path d="M0.4,4.5 Q7,-3.4 13.6,4.5 Q7,12.4 0.4,4.5Z" fill="#7a7a7a"/><circle cx="7" cy="4.5" r="2.5" fill="#d8d8d8"/><circle cx="7" cy="4.5" r="1.6" fill="#7a7a7a"/></svg><div class="t" style="left:1715px;top:286px;font-size:11px;color:#6a9fbc">solid_2</div><div class="a" style="left:1685px;top:308px;width:9px;height:9px;border:1px solid #6470c0;border-radius:2px;background:linear-gradient(#fff,#e2e2e2)"></div><div class="a" style="left:1687px;top:312px;width:5px;height:1px;background:#1010d0"></div><div class="a" style="left:1689px;top:310px;width:1px;height:5px;background:#1010d0"></div><svg class="a" style="left:1698px;top:308px" width="14" height="9" viewBox="0 0 14 9"><path d="M0.4,4.5 Q7,-3.4 13.6,4.5 Q7,12.4 0.4,4.5Z" fill="#7a7a7a"/><circle cx="7" cy="4.5" r="2.5" fill="#d8d8d8"/><circle cx="7" cy="4.5" r="1.6" fill="#7a7a7a"/></svg><div class="t" style="left:1715px;top:306px;font-size:11px;color:#6a9fbc">solid_1</div><div class="a" style="left:1685px;top:328px;width:9px;height:9px;border:1px solid #6470c0;border-radius:2px;background:linear-gradient(#fff,#e2e2e2)"></div><div class="a" style="left:1687px;top:332px;width:5px;height:1px;background:#1010d0"></div><div class="a" style="left:1689px;top:330px;width:1px;height:5px;background:#1010d0"></div><svg class="a" style="left:1698px;top:328px" width="14" height="9" viewBox="0 0 14 9"><path d="M0.4,4.5 Q7,-3.4 13.6,4.5 Q7,12.4 0.4,4.5Z" fill="#7a7a7a"/><circle cx="7" cy="4.5" r="2.5" fill="#d8d8d8"/><circle cx="7" cy="4.5" r="1.6" fill="#7a7a7a"/></svg><div class="t" style="left:1715px;top:326px;font-size:11px;color:#6a9fbc">solid_0</div><svg class="a" style="left:1870px;top:340px" width="8" height="8" viewBox="0 0 8 8"><path d="M1 7 L7 1 M4 7 L7 4" stroke="#888" stroke-width="0.8"/></svg>
<!-- axis -->
<svg class="a" style="left:880px;top:838px" width="80" height="80" viewBox="0 0 80 80">
  <line x1="17" y1="52" x2="17" y2="32" stroke="#3ab03a" stroke-width="1.8"/>
  <path d="M14 33 L17 28 L20 33Z" fill="#2e8a2e"/>
  <line x1="21" y1="65.8" x2="52" y2="65.8" stroke="#e01818" stroke-width="2"/>
  <path d="M51 62 L56 65.5 L51 69Z" fill="#b01010"/>
  <text x="9" y="23" font-family="Liberation Sans" font-weight="bold" font-style="italic" font-size="22" fill="#3ab03a">Y</text>
  <path d="M10.0,49.0 L26.0,49.0 L25.5,53.0 L18.5,62.5 L22.8,64.8 L22.0,71.8 L6.4,71.8 L7.3,67.5 L17.8,53.0 L9.5,53.0 Z" fill="#7474f4"/>
  <text x="57" y="69.5" font-family="Liberation Sans" font-weight="bold" font-style="italic" font-size="22" fill="#e01818">X</text>
</svg>
<div class="a" style="left:826px;top:950px;width:199px;height:28px;border:1px solid #c4dbe6;border-radius:4px;background:rgba(235,235,235,0.8)"></div>
<div class="t" style="left:835px;top:959px;font-size:11px;color:#9ab0bf">solid_4_face_21</div>
<svg class="a" style="left:1015px;top:968px" width="8" height="8" viewBox="0 0 8 8"><path d="M1 7.5 L7.5 1 M4.5 7.5 L7.5 4.5" stroke="#8a8a8a" stroke-width="0.8"/></svg>
<!-- report -->
<div class="a" style="left:1753px;top:956px;width:137px;height:32px;background:#0b5c9c;border-radius:3px 3px 0 0"></div>
<svg class="a" style="left:1763px;top:964px" width="24" height="17" viewBox="0 0 24 17">
  <ellipse cx="11.5" cy="8" rx="11.5" ry="8" fill="#fff"/>
  <path d="M17 13 L23 17 L14 15Z" fill="#fff"/>
  <rect x="6" y="4.5" width="11" height="7.5" rx="1" fill="#0b5c9c"/>
  <rect x="12" y="3.2" width="3" height="2" fill="#0b5c9c"/>
  <circle cx="11.5" cy="8.3" r="2.3" fill="#fff"/><circle cx="11.5" cy="8.3" r="1.2" fill="#0b5c9c"/>
</svg>
<div class="t" style="left:1797px;top:967px;font-size:12px;color:#fff;letter-spacing:-0.1px">Report an issue</div>


</body></html>
